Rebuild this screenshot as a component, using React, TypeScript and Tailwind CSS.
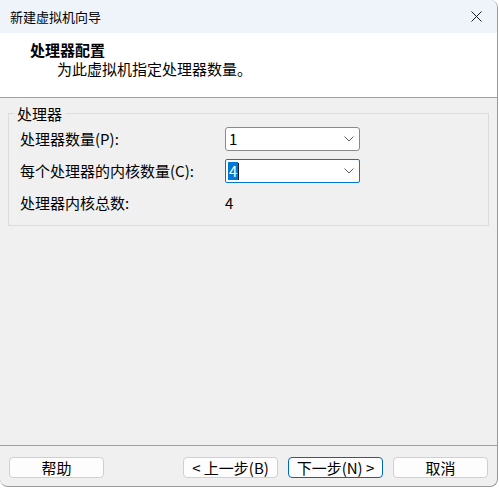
const font = { fontFamily: '"Noto Sans CJK SC", "Noto Sans", sans-serif' };

const Chevron = () => (
  <svg width="10" height="6" viewBox="0 0 10 6" className="shrink-0">
    <polyline points="0.5,0.5 5,5 9.5,0.5" fill="none" stroke="#5f5f5f" strokeWidth="1" />
  </svg>
);

const Combo = ({ value, focused }: { value: string; focused?: boolean }) => (
  <div
    className={
      focused
        ? "h-[24px] w-[135px] flex items-center justify-between bg-white border border-[#0078d7] rounded-[2px] pl-[2px] pr-[5px]"
        : "h-[24px] w-[135px] flex items-center justify-between bg-white border border-[#8a8a8a] rounded-[3px] pl-[2px] pr-[5px]"
    }
  >
    {focused ? (
      <span className="flex items-center">
        <span className="bg-[#0078d7] text-white leading-[18px] px-[1px]">{value}</span>
        <span className="w-[1px] h-[17px] bg-[#1a1a1a]" />
      </span>
    ) : (
      <span className="leading-[18px] px-[1px]">{value}</span>
    )}
    <Chevron />
  </div>
);

const WizButton = ({ children, primary }: { children: React.ReactNode; primary?: boolean }) => (
  <button
    className={
      primary
        ? "h-[21px] w-[95px] flex items-center justify-center rounded-[4px] bg-[#fdfdfd] border border-[#0067c0] text-[15px] leading-none"
        : "h-[21px] w-[95px] flex items-center justify-center rounded-[4px] bg-[#fdfdfd] border border-[#d0d0d0] text-[15px] leading-none"
    }
  >
    {children}
  </button>
);

export default function App() {
  return (
    <div className="w-[499px] h-[488px] bg-white text-[#000]" style={font}>
      <div className="w-[498px] h-[487px] flex flex-col bg-[#f0f0f0] border-r border-b border-[#9a9a9a] rounded-tr-[8px] rounded-b-[8px] overflow-hidden">
        {/* Title bar */}
        <div className="h-[33px] shrink-0 flex items-center justify-between bg-[#eef4f9] pl-[10px] pr-[15px]">
          <span className="text-[13px] leading-[18px]">新建虚拟机向导</span>
          <svg width="11" height="11" viewBox="0 0 11 11">
            <path d="M0.5 0.5 L10.5 10.5 M10.5 0.5 L0.5 10.5" stroke="#1a1a1a" strokeWidth="1" />
          </svg>
        </div>

        {/* Header */}
        <div className="h-[65px] shrink-0 bg-white border-b border-[#a0a0a0] pt-[7px] pl-[30px]">
          <div className="text-[15px] leading-[19px] font-bold">处理器配置</div>
          <div className="text-[15px] leading-[19px] pl-[27px]">为此虚拟机指定处理器数量。</div>
        </div>

        {/* Content */}
        <div className="flex-1 px-[8px] pt-[6px] text-[15px]">
          <fieldset className="border border-[#dcdcdc] pl-[11px] pb-[10px]">
            <legend className="ml-[-6px] px-[3px] leading-[19px]">处理器</legend>
            <div className="grid grid-cols-[205px_135px] gap-y-[8px] pt-[4px] items-center">
              <span className="leading-[24px]">处理器数量(P):</span>
              <Combo value="1" />
              <span className="leading-[24px]">每个处理器的内核数量(C):</span>
              <Combo value="4" focused />
              <span className="leading-[24px]">处理器内核总数:</span>
              <span className="leading-[24px]">4</span>
            </div>
          </fieldset>
        </div>

        {/* Footer */}
        <div className="shrink-0 border-t border-[#a0a0a0] pt-[11px] pb-[8px] pl-[9px] pr-[9px] flex">
          <WizButton>帮助</WizButton>
          <div className="ml-auto flex gap-[10px]">
            <WizButton>&lt; 上一步(B)</WizButton>
            <WizButton primary>下一步(N) &gt;</WizButton>
            <WizButton>取消</WizButton>
          </div>
        </div>
      </div>
    </div>
  );
}
